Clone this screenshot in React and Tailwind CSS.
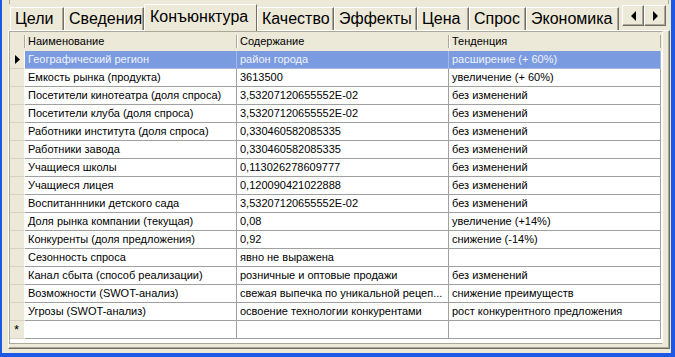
import { useState } from "react";

const tabs = [
  { label: "Цели", w: "w-[54px]" },
  { label: "Сведения", w: "w-[80px]" },
  { label: "Конъюнктура", w: "w-[113px]", active: true },
  { label: "Качество", w: "w-[77px]" },
  { label: "Эффекты", w: "w-[83px]" },
  { label: "Цена", w: "w-[52px]" },
  { label: "Спрос", w: "w-[57px]" },
  { label: "Экономика", w: "w-[93px]" },
];

const rows = [
  ["Географический регион", "район города", "расширение (+ 60%)"],
  ["Емкость рынка (продукта)", "3613500", "увеличение (+ 60%)"],
  ["Посетители кинотеатра (доля спроса)", "3,53207120655552E-02", "без изменений"],
  ["Посетители клуба (доля спроса)", "3,53207120655552E-02", "без изменений"],
  ["Работники института (доля спроса)", "0,330460582085335", "без изменений"],
  ["Работники завода", "0,330460582085335", "без изменений"],
  ["Учащиеся школы", "0,113026278609777", "без изменений"],
  ["Учащиеся лицея", "0,120090421022888", "без изменений"],
  ["Воспитаннники детского сада", "3,53207120655552E-02", "без изменений"],
  ["Доля рынка компании (текущая)", "0,08", "увеличение (+14%)"],
  ["Конкуренты (доля предложения)", "0,92", "снижение (-14%)"],
  ["Сезонность спроса", "явно не выражена", ""],
  ["Канал сбыта (способ реализации)", "розничные и оптовые продажи", "без изменений"],
  ["Возможности (SWOT-анализ)", "свежая выпечка по уникальной рецеп...", "снижение преимуществ"],
  ["Угрозы (SWOT-анализ)", "освоение технологии конкурентами", "рост конкурентного предложения"],
];

const columns = ["Наименование", "Содержание", "Тенденция"];

function ArrowButton({ dir }) {
  return (
    <button
      type="button"
      className="flex h-[21px] w-[22px] items-center justify-center border border-t-white border-l-white border-r-[#716f64] border-b-[#716f64] bg-[#ece9d8] shadow-[inset_-1px_-1px_0_#aca899]"
    >
      <svg width="5" height="10" viewBox="0 0 5 10">
        {dir === "left" ? (
          <polygon points="5,0 5,10 0,5" fill="#000" />
        ) : (
          <polygon points="0,0 0,10 5,5" fill="#000" />
        )}
      </svg>
    </button>
  );
}

function HeaderCell({ label }) {
  return (
    <div className="flex h-full w-[212px] items-center">
      <span className="h-[13px] w-px bg-[#aca899]" />
      <span className="h-[13px] w-px bg-white" />
      <span className="pl-[2px]">{label}</span>
    </div>
  );
}

export default function App() {
  const [selected] = useState(0);

  return (
    <div
      className="flex h-[357px] w-[675px] bg-[#1d58e6] pr-[4px] pb-[4px] pl-[2px]"
      style={{ fontFamily: '"Liberation Sans", Arial, sans-serif' }}
    >
      <div className="flex flex-1 flex-col bg-[#ece9d8]">
        <div className="ml-[7px] mr-[2px] h-[4px] border-x border-[#aca899]" />
        <div className="flex h-[26px] items-end pl-[8px] text-[16px] text-black">
          {tabs.map((tab) =>
            tab.active ? (
              <div
                key={tab.label}
                className={`${tab.w} relative z-10 -mb-px flex h-[27px] items-center border-l border-t border-r border-l-white border-t-white border-r-[#716f64] bg-[#ece9d8] pb-[3px] pl-[5px] leading-none`}
              >
                {tab.label}
              </div>
            ) : (
              <div
                key={tab.label}
                className={`${tab.w} flex h-[23px] items-center border-l border-t border-r border-l-white border-t-white border-r-[#716f64] bg-[#ece9d8] pl-[4px] leading-none shadow-[inset_-1px_0_0_#aca899]`}
              >
                {tab.label}
              </div>
            ),
          )}
          <div className="mb-[4px] ml-[3px] flex self-end">
            <ArrowButton dir="left" />
            <ArrowButton dir="right" />
          </div>
        </div>

        <div className="mb-[4px] ml-[6px] mr-[1px] flex h-[319px] border border-t-white border-l-white border-r-[#716f64] border-b-[#716f64] pr-[6px] pb-[4px] shadow-[inset_-1px_-1px_0_#aca899]">
          <div className="flex w-[654px] flex-col border border-t-[#aca899] border-l-[#aca899] border-r-white border-b-[#aca899] bg-white text-[11px] text-black">
            <div className="flex h-[19px] bg-[#ece9d8]">
              <div className="w-[14px]" />
              {columns.map((c) => (
                <HeaderCell key={c} label={c} />
              ))}
              <span className="h-[13px] w-px self-center bg-[#aca899]" />
            </div>

            {[...rows, null].map((row, i) => {
              const isSel = i === selected;
              const cellCls = isSel
                ? "bg-[#7b9be0] text-[#eef2fc] border-[#a9b9de]"
                : "bg-white border-[#a0a0a0]";
              return (
                <div key={i} className="flex h-[18px]">
                  <div className="flex w-[15px] items-center border-r border-b border-r-white border-b-[#d6d3c6] bg-[#ece9d8] pl-[5px]">
                    {isSel && (
                      <svg width="5" height="9" viewBox="0 0 5 9">
                        <polygon points="0,0 0,9 5,4.5" fill="#000" />
                      </svg>
                    )}
                    {row === null && (
                      <span className="-ml-[1px] text-[13px] leading-none">*</span>
                    )}
                  </div>
                  {[0, 1, 2].map((c) => (
                    <div
                      key={c}
                      className={`w-[212px] overflow-hidden border-r border-b pl-[3px] leading-[17px] whitespace-nowrap ${row === null ? "bg-white border-[#a0a0a0]" : cellCls}`}
                    >
                      {row ? row[c] : ""}
                    </div>
                  ))}
                </div>
              );
            })}
          </div>
        </div>
      </div>
    </div>
  );
}
